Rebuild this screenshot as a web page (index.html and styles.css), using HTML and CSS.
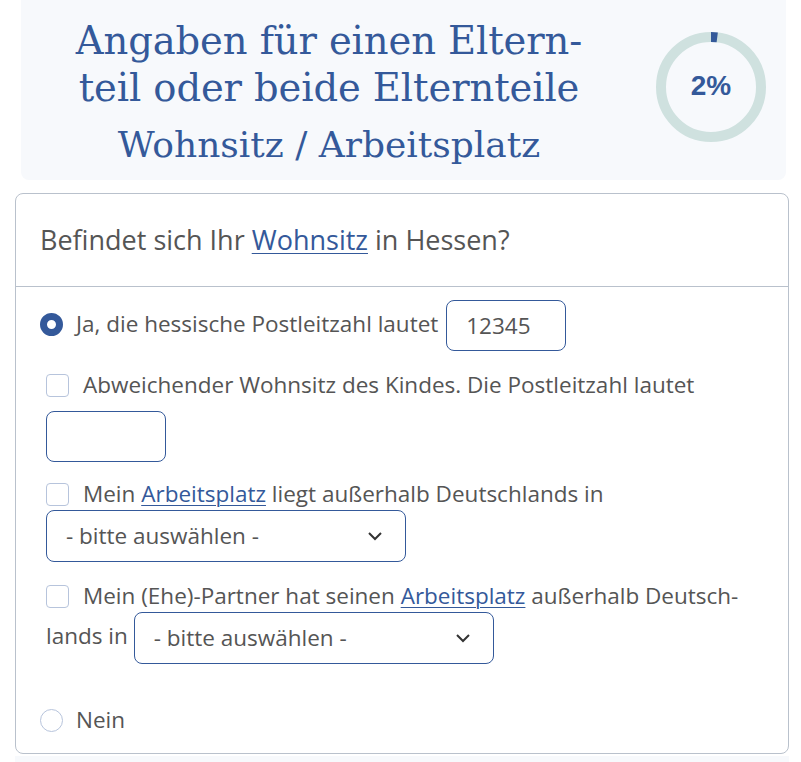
FILE: index.html
```html
<!DOCTYPE html>
<html lang="de">
<head>
    <meta charset="UTF-8">
    <meta name="viewport" content="width=device-width, initial-scale=1.0">
    <title>Wohnsitz / Arbeitsplatz</title>
    <link rel="stylesheet" href="styles.css">
</head>
<body>
    <div class="page">
        <div class="head">
            <div class="titles">
                <h1>Angaben für einen Eltern-<br>teil oder beide Elternteile</h1>
                <h2>Wohnsitz / Arbeitsplatz</h2>
            </div>
            <div class="progress">
                <svg width="110" height="110" viewBox="0 0 110 110">
                    <circle cx="55" cy="55" r="50" fill="none" stroke="#cfe1df" stroke-width="10"/>
                    <circle cx="55" cy="55" r="50" fill="none" stroke="#34599a" stroke-width="10"
                            stroke-dasharray="6.3 400" transform="rotate(-90 55 55)"/>
                </svg>
                <span class="progress-label">2%</span>
            </div>
        </div>

        <div class="card">
            <div class="card-head">
                Befindet sich Ihr <a href="#">Wohnsitz</a> in Hessen?
            </div>
            <div class="card-body">
                <div class="row row-first">
                    <label><input type="radio" name="hessen" class="radio" checked>Ja, die hessische Postleitzahl lautet</label>
                    <input type="text" class="field" value="12345">
                </div>
                <div class="sub">
                    <div class="row">
                        <label><input type="checkbox" class="check">Abweichender Wohnsitz des Kindes. Die Postleitzahl lautet</label>
                        <input type="text" class="field field-own">
                    </div>
                    <div class="row">
                        <label><input type="checkbox" class="check">Mein <a href="#">Arbeitsplatz</a> liegt außerhalb Deutschlands in</label>
                        <span class="select">
                            <span>- bitte auswählen -</span>
                            <svg width="16" height="10" viewBox="0 0 16 10"><path d="M2 2l6 6 6-6" fill="none" stroke="#333" stroke-width="2"/></svg>
                        </span>
                    </div>
                    <div class="row row-partner">
                        <label><input type="checkbox" class="check">Mein (Ehe)-Partner hat seinen <a href="#">Arbeitsplatz</a> außerhalb Deutsch-<br>lands in</label>
                        <span class="select">
                            <span>- bitte auswählen -</span>
                            <svg width="16" height="10" viewBox="0 0 16 10"><path d="M2 2l6 6 6-6" fill="none" stroke="#333" stroke-width="2"/></svg>
                        </span>
                    </div>
                </div>
                <div class="row row-last">
                    <label><input type="radio" name="hessen" class="radio">Nein</label>
                </div>
            </div>
        </div>
        <div class="foot"></div>
    </div>
</body>
</html>
```

FILE: styles.css
```css
body {
    margin: 0;
    background-color: #fff;
    font-family: "Open Sans", Arial, sans-serif;
    color: #555;
}
.page {
    padding: 0 12px 0 15px;
}
.head {
    display: flex;
    align-items: center;
    margin: 0 3px 13px 6px;
    padding: 0 20px 0 0;
    height: 180px;
    background-color: #f7f9fc;
    border-radius: 0 0 8px 8px;
}
.titles {
    flex: 1;
    text-align: center;
    color: #34599a;
    font-family: "DejaVu Serif", serif;
    margin-top: 2px;
}
h1 {
    margin: 0;
    font-size: 38.5px;
    font-weight: normal;
    line-height: 47px;
    letter-spacing: -0.1px;
}
h2 {
    margin: 14px 0 0;
    font-size: 36px;
    font-weight: normal;
    line-height: 40px;
}
.progress {
    position: relative;
    width: 110px;
    height: 110px;
    margin-left: 19px;
    margin-top: -7px;
}
.progress svg {
    display: block;
}
.progress-label {
    position: absolute;
    left: 0;
    right: 0;
    top: 38px;
    text-align: center;
    font-family: "Liberation Sans", Arial, sans-serif;
    font-weight: bold;
    font-size: 28px;
    color: #34599a;
}
.card {
    border: 1px solid #b9c1cc;
    border-radius: 8px;
    background-color: #fff;
}
.card-head {
    padding: 0 24px;
    height: 92px;
    line-height: 92px;
    font-size: 27px;
    border-bottom: 1px solid #b9c1cc;
}
a {
    color: #34599a;
    text-decoration: underline;
    text-decoration-thickness: 1px;
    text-underline-offset: 3px;
}
.card-body {
    padding: 13px 24px 17px;
    font-size: 22.5px;
    line-height: 32px;
}
.row {
    margin-top: 16px;
}
.row-first {
    margin-top: 0;
}
.sub .row:first-child {
    margin-top: 18px;
}
.sub .row-partner {
    margin-top: 18px;
}
.row-last {
    margin-top: 40px;
}
.sub {
    padding-left: 6px;
}
.radio, .check {
    appearance: none;
    -webkit-appearance: none;
    width: 23px;
    height: 23px;
    margin: 0 13px 0 0;
    vertical-align: -4px;
    background-color: #fff;
    border: 1px solid #b7c4dc;
}
.radio {
    border-radius: 50%;
}
.radio:checked {
    border: 7px solid #34599a;
}
.check {
    margin-right: 14px;
    border-radius: 4px;
}
.field {
    box-sizing: border-box;
    width: 120px;
    height: 51px;
    margin-left: 2px;
    padding: 0 19px;
    border: 1px solid #34599a;
    border-radius: 8px;
    font-family: inherit;
    font-size: 22.5px;
    color: #555;
    vertical-align: middle;
}
.field-own {
    margin: 10px 0 0;
}
.select {
    box-sizing: border-box;
    display: inline-flex;
    align-items: center;
    justify-content: space-between;
    width: 360px;
    height: 52px;
    padding: 0 22px 0 19px;
    border: 1px solid #34599a;
    border-radius: 8px;
    vertical-align: middle;
}
.foot {
    height: 20px;
    margin-top: 2px;
    background-color: #f7f9fc;
}
```
